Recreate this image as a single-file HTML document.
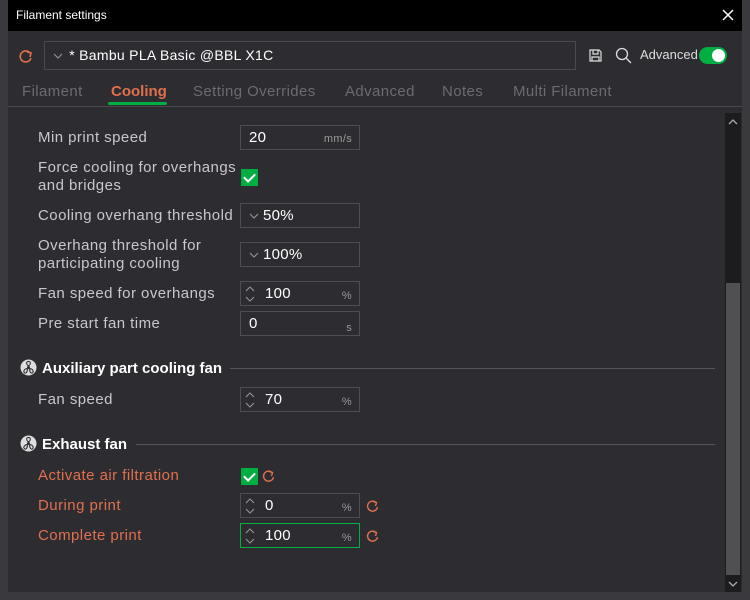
<!DOCTYPE html><html><head><style>
*{box-sizing:border-box;margin:0;padding:0}
body{width:750px;height:600px;background:#3a3a3e;font-family:"Liberation Sans",sans-serif;position:relative;overflow:hidden;color:#cfcfd2}
.win{position:absolute;left:8px;top:0;width:734px;height:592px;background:#2d2c31}
.title{position:absolute;left:0;top:0;width:734px;height:31px;background:#000;color:#fff;font-size:12px;line-height:31px;padding-left:8px}
.a{position:absolute}
.lbl{position:absolute;left:30px;font-size:15px;color:#c8c8cc;line-height:18px;letter-spacing:0.45px}
.or{color:#e0704e}
.inp{position:absolute;left:232px;width:120px;height:25px;border:1px solid #4d4d52;font-size:15px;color:#fff;line-height:23px;padding-left:8px;letter-spacing:0.3px}
.u{position:absolute;right:7px;top:1px;font-size:11px;color:#999}
.sp{position:absolute;left:4px;top:3px}
.cb{position:absolute;left:233px;width:17px;height:17px;background:#00ae42}
.hd{position:absolute;left:12px;font-size:15px;font-weight:bold;color:#fff;letter-spacing:0}
.line{position:absolute;height:1px;background:#55555a}
.fan{display:inline-block;vertical-align:-3px;margin-right:5px}
.tab{position:absolute;top:83px;font-size:15px;color:#6b6b70;letter-spacing:0.4px}
</style></head><body>
<div class="win">
<div class="title">Filament settings</div>
<svg class="a" style="left:714px;top:9px" width="12" height="12"><path d="M1 1L11 11M11 1L1 11" stroke="#fff" stroke-width="1.5"/></svg>
<svg class="a" style="left:10px;top:48px" width="16" height="16"><path d="M12 5A5.5 5.5 0 1 0 13 10" stroke="#e0704e" stroke-width="1.6" fill="none"/><path d="M9 4l4 1-1 4" stroke="#e0704e" stroke-width="1.6" fill="none"/></svg>
<div class="a" style="left:36px;top:41px;width:532px;height:29px;border:1px solid #4a4a4f;font-size:14px;color:#fff;line-height:27px;padding-left:8px;letter-spacing:0.3px"><svg width="10" height="8" style="margin-right:2px"><path d="M1 2l4 4 4-4" stroke="#999" fill="none"/></svg> * Bambu PLA Basic @BBL X1C</div>
<svg class="a" style="left:580px;top:48px" width="15" height="15"><path d="M2 2h9l2 2v9H2z M5 2v4h5V2 M4 13V9h7v4" stroke="#ddd" stroke-width="1.2" fill="none"/></svg>
<svg class="a" style="left:607px;top:47px" width="18" height="18"><circle cx="7" cy="7" r="5.5" stroke="#ddd" stroke-width="1.3" fill="none"/><path d="M11 11l5 5" stroke="#ddd" stroke-width="1.3"/></svg>
<div class="a" style="left:632px;top:47px;font-size:13px;color:#ddd">Advanced</div>
<div class="a" style="left:691px;top:47px;width:28px;height:17px;border-radius:9px;background:#00ae42"><div style="position:absolute;right:2px;top:2px;width:13px;height:13px;border-radius:50%;background:#fff"></div></div>
<div class="tab" style="left:14px">Filament</div>
<div class="tab" style="left:103px;color:#e0704e;font-weight:bold;letter-spacing:0">Cooling</div>
<div class="a" style="top:102px;left:100px;width:59px;height:3px;background:#00ae42;border-radius:2px"></div>
<div class="tab" style="left:185px">Setting Overrides</div>
<div class="tab" style="left:337px">Advanced</div>
<div class="tab" style="left:434px">Notes</div>
<div class="tab" style="left:505px">Multi Filament</div>
<div class="line" style="left:0;top:106px;width:734px;background:#48484d"></div>
<div class="a" style="left:717px;top:113px;width:16px;height:479px;background:#1c1c1e"></div>
<div class="a" style="left:718px;top:283px;width:14px;height:292px;background:#505053"></div>
<svg class="a" style="left:720px;top:118px" width="10" height="8"><path d="M1 6l4-4 4 4" stroke="#aaa" stroke-width="1.3" fill="none"/></svg>
<svg class="a" style="left:720px;top:580px" width="10" height="8"><path d="M1 2l4 4 4-4" stroke="#aaa" stroke-width="1.3" fill="none"/></svg>

<div class="lbl" style="top:129px">Min print speed</div>
<div class="inp" style="top:125px">20<span class="u" style="top:2px">mm/s</span></div>
<div class="lbl" style="top:159px">Force cooling for overhangs<br>and bridges</div>
<div class="cb" style="top:169px"></div>
<div class="lbl" style="top:207px">Cooling overhang threshold</div>
<div class="inp" style="top:203px"><svg width="10" height="8" style="margin-right:4px"><path d="M1 2l4 4 4-4" stroke="#999" fill="none"/></svg>50%</div>
<div class="lbl" style="top:237px">Overhang threshold for<br>participating cooling</div>
<div class="inp" style="top:242px"><svg width="10" height="8" style="margin-right:4px"><path d="M1 2l4 4 4-4" stroke="#999" fill="none"/></svg>100%</div>
<div class="lbl" style="top:285px">Fan speed for overhangs</div>
<div class="inp" style="top:281px;padding-left:24px"><svg class="sp" width="10" height="18"><path d="M1 6l4-4 4 4M1 12l4 4 4-4" stroke="#999" fill="none"/></svg>100<span class="u" style="top:3px">%</span></div>
<div class="lbl" style="top:315px">Pre start fan time</div>
<div class="inp" style="top:311px">0<span class="u" style="top:5px">s</span></div>

<div class="hd" style="top:359px"><svg class="fan" width="17" height="17"><circle cx="8.5" cy="8.5" r="8" fill="#ddd"/><circle cx="8.5" cy="8.5" r="1.5" fill="#2d2c31"/><path d="M8.5 7C6 5 6 2.5 8.5 2.5S11 5 8.5 7M7.2 9.5C4 10 3 12.5 4.5 13.8S8 12 7.2 9.5M9.8 9.5C13 10 14 12.5 12.5 13.8S9 12 9.8 9.5" stroke="#2d2c31" fill="none"/></svg>Auxiliary part cooling fan</div>
<div class="line" style="left:222px;top:368px;width:485px"></div>
<div class="lbl" style="top:391px">Fan speed</div>
<div class="inp" style="top:387px;padding-left:24px"><svg class="sp" width="10" height="18"><path d="M1 6l4-4 4 4M1 12l4 4 4-4" stroke="#999" fill="none"/></svg>70<span class="u" style="top:3px">%</span></div>

<div class="hd" style="top:435px"><svg class="fan" width="17" height="17"><circle cx="8.5" cy="8.5" r="8" fill="#ddd"/><circle cx="8.5" cy="8.5" r="1.5" fill="#2d2c31"/><path d="M8.5 7C6 5 6 2.5 8.5 2.5S11 5 8.5 7M7.2 9.5C4 10 3 12.5 4.5 13.8S8 12 7.2 9.5M9.8 9.5C13 10 14 12.5 12.5 13.8S9 12 9.8 9.5" stroke="#2d2c31" fill="none"/></svg>Exhaust fan</div>
<div class="line" style="left:128px;top:444px;width:579px"></div>
<div class="lbl or" style="top:467px">Activate air filtration</div>
<div class="cb" style="top:468px"></div>
<svg class="a" style="left:253px;top:468px" width="15" height="15"><path d="M11 4.5A5 5 0 1 0 12.5 9" stroke="#e0704e" stroke-width="1.4" fill="none"/><path d="M8 3.5l3.5 1-1 3.5" stroke="#e0704e" stroke-width="1.4" fill="none"/></svg>
<div class="lbl or" style="top:497px">During print</div>
<div class="inp" style="top:493px;padding-left:24px"><svg class="sp" width="10" height="18"><path d="M1 6l4-4 4 4M1 12l4 4 4-4" stroke="#999" fill="none"/></svg>0<span class="u" style="top:3px">%</span></div>
<svg class="a" style="left:357px;top:498px" width="15" height="15"><path d="M11 4.5A5 5 0 1 0 12.5 9" stroke="#e0704e" stroke-width="1.4" fill="none"/><path d="M8 3.5l3.5 1-1 3.5" stroke="#e0704e" stroke-width="1.4" fill="none"/></svg>
<div class="lbl or" style="top:527px">Complete print</div>
<div class="inp" style="top:523px;padding-left:24px;border-color:#00ae42"><svg class="sp" width="10" height="18"><path d="M1 6l4-4 4 4M1 12l4 4 4-4" stroke="#999" fill="none"/></svg>100<span class="u" style="top:3px">%</span></div>
<svg class="a" style="left:357px;top:528px" width="15" height="15"><path d="M11 4.5A5 5 0 1 0 12.5 9" stroke="#e0704e" stroke-width="1.4" fill="none"/><path d="M8 3.5l3.5 1-1 3.5" stroke="#e0704e" stroke-width="1.4" fill="none"/></svg>
</div>
<style>.cb::after{content:"";position:absolute;left:5px;top:2px;width:5px;height:9px;border:solid #fff;border-width:0 2px 2px 0;transform:rotate(45deg)}</style>
</body></html>
